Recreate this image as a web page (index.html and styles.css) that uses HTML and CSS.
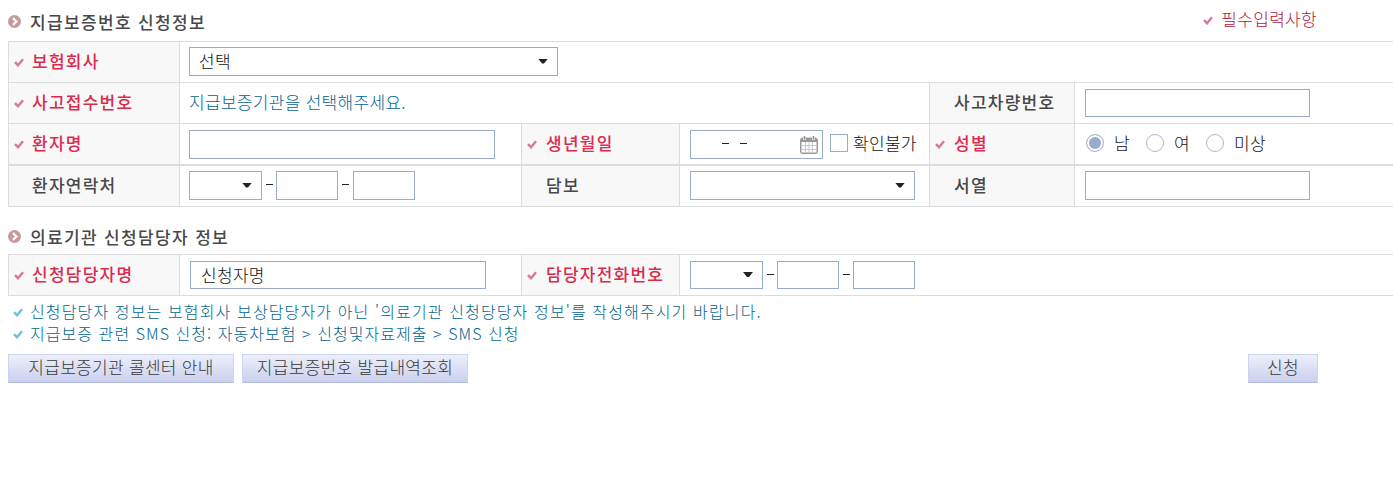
FILE: index.html
```html
<!DOCTYPE html>
<html lang="ko">
<head>
<meta charset="utf-8">
<title>지급보증번호 신청</title>
<link rel="stylesheet" href="styles.css">
</head>
<body>
<svg width="0" height="0" class="defs">
  <symbol id="check" viewBox="0 0 10 9"><path d="M1 4.2 L4 7.2 L9 1.2" fill="none" stroke="currentColor" stroke-width="2.5"/></symbol>
  <symbol id="bullet" viewBox="0 0 12 12"><circle cx="6" cy="6" r="6" fill="#c79a99"/><path d="M4.6 2.9 L7.8 6 L4.6 9.1" fill="none" stroke="#fff" stroke-width="2"/></symbol>
</svg>
<header class="head">
  <h2 class="title"><svg class="bullet"><use href="#bullet"/></svg><span>지급보증번호 신청정보</span></h2>
  <p class="required"><svg class="check"><use href="#check"/></svg><span>필수입력사항</span></p>
</header>
<section class="table">
  <div class="row row-a">
    <div class="th req"><svg class="check"><use href="#check"/></svg><span>보험회사</span></div>
    <div class="td up"><div class="box select w369"><span>선택</span><i class="arrow"></i></div></div>
  </div>
  <div class="row row-b">
    <div class="th req"><svg class="check"><use href="#check"/></svg><span>사고접수번호</span></div>
    <div class="td"><span class="guide">지급보증기관을 선택해주세요.</span></div>
    <div class="th"><span>사고차량번호</span></div>
    <div class="td"><input class="box short w225"></div>
  </div>
  <div class="row row-c double">
    <div class="th req"><svg class="check"><use href="#check"/></svg><span>환자명</span></div>
    <div class="td"><input class="box w306"></div>
    <div class="th req"><svg class="check"><use href="#check"/></svg><span>생년월일</span></div>
    <div class="td">
      <div class="box date"><i class="dash"></i><i class="dash"></i>
        <svg class="cal" viewBox="0 0 18 18"><path d="M2 1.5h14l2 2V16l-1.500 2h-15L0 16V3.500z" fill="#999"/><path d="M1.500 6h15v10.500h-15z" fill="#fff"/><path d="M1.500 9.500h15M1.500 13.500h15M5.500 6v10.500M9 6v10.500M12.500 6v10.500" stroke="#c8c8c8"/><path d="M4.500 0v4M13.500 0v4" stroke="#fff" stroke-width="2.600"/><path d="M4.500 0v3.500M13.500 0v3.500" stroke="#888" stroke-width="1.400"/></svg>
      </div>
      <i class="checkbox"></i><span class="unknown">확인불가</span>
    </div>
    <div class="th req"><svg class="check"><use href="#check"/></svg><span>성별</span></div>
    <div class="td radios"><i class="radio on"></i><span>남</span><i class="radio"></i><span>여</span><i class="radio"></i><span>미상</span></div>
  </div>
  <div class="row row-c">
    <div class="th"><span>환자연락처</span></div>
    <div class="td up"><div class="box select w73"><i class="arrow"></i></div><i class="dash sep"></i><input class="box w62"><i class="dash sep wide"></i><input class="box w62"></div>
    <div class="th"><span>담보</span></div>
    <div class="td up"><div class="box select w225"><i class="arrow"></i></div></div>
    <div class="th"><span>서열</span></div>
    <div class="td up"><input class="box w225"></div>
  </div>
</section>
<h2 class="title second"><svg class="bullet"><use href="#bullet"/></svg><span>의료기관 신청담당자 정보</span></h2>
<section class="table">
  <div class="row row-d">
    <div class="th req"><svg class="check"><use href="#check"/></svg><span>신청담당자명</span></div>
    <div class="td name"><input class="box short w296" value="신청자명"></div>
    <div class="th req"><svg class="check"><use href="#check"/></svg><span>담당자전화번호</span></div>
    <div class="td"><div class="box short select w73"><i class="arrow"></i></div><i class="dash sep"></i><input class="box short w62"><i class="dash sep"></i><input class="box short w62"></div>
  </div>
</section>
<ul class="notes">
  <li><svg class="check"><use href="#check"/></svg><span>신청담당자 정보는 보험회사 보상담당자가 아닌 '의료기관 신청당당자 정보'를 작성해주시기 바랍니다.</span></li>
  <li><svg class="check"><use href="#check"/></svg><span class="sms">지급보증 관련 SMS 신청: 자동차보험 &gt; 신청및자료제출 &gt; SMS 신청</span></li>
</ul>
<footer class="actions">
  <button class="btn">지급보증기관 콜센터 안내</button>
  <button class="btn">지급보증번호 발급내역조회</button>
  <button class="btn apply">신청</button>
</footer>
</body>
</html>
```
FILE: styles.css
```css
* { box-sizing: border-box; }
body { margin: 0; padding-left: 8px; width: 1393px; overflow: hidden; background: #fff; color: #111; font: 300 17px/20px "Noto Sans CJK KR", sans-serif; letter-spacing: 0.3px; }
h2, p, ul { margin: 0; padding: 0; font-size: 17px; }
span { white-space: nowrap; }
.defs { display: block; height: 0; }
.head { height: 41px; display: flex; justify-content: space-between; padding: 12px 75px 0 0; }
.title { display: flex; align-items: flex-start; gap: 8px; height: 20px; color: #484848; font-weight: 500; letter-spacing: 1.35px; }
.bullet { width: 13px; height: 13px; margin-top: 3px; }
.second { margin: 20px 0 7px; }
.title span { margin-left: 1px; }
.required { display: flex; gap: 8px; margin-top: -3px; color: #b01840; }
.required .check { margin: 7px 1px 0 -1px; }
.required span { margin-left: -1px; margin-right: 1px; }
.check { flex: none; width: 10px; height: 9px; color: #d67b93; }
.table { border: solid #dcdcdc; border-width: 1px 0 0 1px; }
.row { display: grid; height: 41px; border-bottom: 1px solid #dcdcdc; }
.double { height: 42px; border-bottom-width: 2px; }
.row-a { grid-template-columns: 171px 1fr; }
.row-b { grid-template-columns: 171px 750px 145px 1fr; }
.row-c { grid-template-columns: 171px 342px 158px 250px 145px 1fr; }
.row-d { grid-template-columns: 171px 342px 158px 1fr; }
.th { display: flex; align-items: center; padding-left: 23px; border-right: 1px solid #dcdcdc; background: #f8f8f8; color: #484848; font-weight: 500; letter-spacing: 1.25px; }
.th span { margin-top: -2px; }
.td + .th { padding-left: 24px; }
.th.req { padding-left: 5px; gap: 8px; color: #dc2a4e; }
.td + .th.req { padding-left: 5px; gap: 9px; }
.td { display: flex; align-items: flex-start; min-width: 0; padding: 6px 0 0 9px; border-right: 1px solid #dcdcdc; }
.td:nth-child(4), .td:nth-child(6) { padding-left: 10px; }
.td:last-child { border-right: 0; }
.up { padding-top: 5px; }
.name { padding-left: 10px; }
.box { flex: none; height: 29px; margin: 0; padding: 0 10px 2px; border: 1px solid #98abc9; border-radius: 0; background: #fff; color: #111; font: inherit; letter-spacing: inherit; }
.short { height: 28px; }
.w369 { width: 369px; }
.w306 { width: 306px; }
.w296 { width: 296px; }
.w225 { width: 225px; }
.w73 { width: 73px; }
.w62 { width: 62px; }
.select { display: flex; align-items: center; padding: 0 9px 1px; }
.select span { margin-top: -1px; }
.arrow { margin-left: auto; width: 10px; height: 5px; background: #222; clip-path: polygon(0 0, 100% 0, 60% 100%, 40% 100%); }
.guide { color: #006590; margin-top: 3px; }
.dash { width: 7px; height: 1px; background: #222; }
.sep { margin: 13px 3px 0 4px; }
.wide { margin-right: 4px; }
.date { width: 133px; display: flex; padding: 12px 4px 0 31px; gap: 11px; }
.cal { width: 18px; height: 18px; margin: -7px 0 0 auto; }
.checkbox { width: 18px; height: 18px; margin: 4px 5px 0 7px; border: 1px solid #98abc9; }
.unknown { margin-top: 3px; }
.radio { width: 18px; height: 18px; margin-right: 10px; border: 1px solid #a9b9d2; border-radius: 50%; }
.radio.on { background: #98abc9; box-shadow: inset 0 0 0 2px #fff; }
.radios span { width: 32px; margin-top: -1px; }
.td.radios { padding: 10px 0 0 11px; }
.notes { list-style: none; padding: 5px 0 0 5px; color: #006590; font-size: 16px; letter-spacing: 1.13px; }
.notes li { display: flex; align-items: flex-start; gap: 7px; height: 22px; }
.notes .check { color: #73c0dc; margin-top: 7px; }
.sms { letter-spacing: 1.05px; }
.actions { display: flex; gap: 8px; padding: 9px 75px 0 0; }
.btn { width: 226px; height: 29px; padding: 0 0 3px; border: 1px solid #ced4ef; border-bottom: 1px solid #b2bbdc; background: linear-gradient(#eceffa, #cbd0ee); color: #383838; font: inherit; letter-spacing: 0.3px; white-space: nowrap; }
.apply { width: 70px; margin-left: auto; }
```
